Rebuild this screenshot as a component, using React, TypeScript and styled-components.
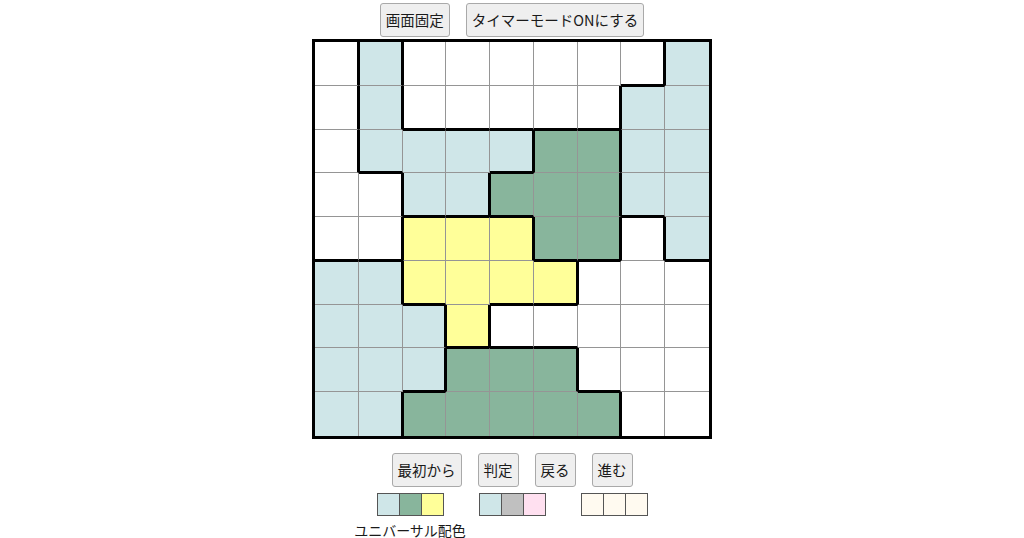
import React from "react";
import styled, { createGlobalStyle } from "styled-components";

const GlobalStyle = createGlobalStyle`
  html, body {
    margin: 0;
    padding: 0;
    background: #ffffff;
    font-family: "Noto Sans CJK JP", "Noto Sans", sans-serif;
    color: #222;
  }
`;

// region id per cell, 9x9
const regions = [
  "ABCCCCCCD",
  "ABCCCCCDD",
  "ABBBBEEDD",
  "AABBEEEDD",
  "AAFFFEEHD",
  "IIFFFFHHH",
  "IIIFHHHHH",
  "IIIJJJHHH",
  "IIJJJJJHH",
];

// colour per cell: w white, b light blue, g green, y yellow
const colors = [
  "wbwwwwwwb",
  "wbwwwwwbb",
  "wbbbbggbb",
  "wwbbgggbb",
  "wwyyyggwb",
  "bbyyyywww",
  "bbbywwwww",
  "bbbgggwww",
  "bbgggggww",
];

const palette: Record<string, string> = {
  w: "#ffffff",
  b: "#cfe6e8",
  g: "#88b59c",
  y: "#ffff99",
};

const THIN = "1px solid #959595";
const THICK_MAIN = "2px solid #000";
const THICK_HALF = "1px solid #000";

const Page = styled.div`
  display: flex;
  flex-direction: column;
  align-items: center;
  padding-top: 3px;
`;

const ButtonRow = styled.div<{ $top?: number }>`
  display: flex;
  gap: 16px;
  margin-top: ${(p) => p.$top ?? 0}px;
`;

const Button = styled.button`
  font-family: "Noto Sans CJK JP", "Noto Sans", sans-serif;
  font-size: 14.5px;
  line-height: 20px;
  color: #1a1a1a;
  background: #efefef;
  border: 1px solid #a9a9a9;
  border-radius: 3px;
  padding: 6px 5px;
  cursor: pointer;
  white-space: nowrap;
`;

const Board = styled.div`
  box-sizing: border-box;
  width: 400px;
  height: 400px;
  margin-top: 2px;
  border: 3px solid #000;
  display: grid;
  grid-template-columns: repeat(9, 1fr);
  grid-template-rows: repeat(9, 1fr);
`;

const Cell = styled.div<{
  $bg: string;
  $right: string;
  $bottom: string;
  $left: string;
  $top: string;
}>`
  box-sizing: border-box;
  background: ${(p) => p.$bg};
  border-right: ${(p) => p.$right};
  border-bottom: ${(p) => p.$bottom};
  border-left: ${(p) => p.$left};
  border-top: ${(p) => p.$top};
`;

const SwatchRow = styled.div`
  display: flex;
  gap: 35px;
  margin-top: 6px;
`;

const SwatchGroup = styled.div`
  width: 67px;
  flex-shrink: 0;
  display: flex;
  flex-direction: column;
  align-items: center;
`;

const Swatches = styled.div`
  display: flex;
  width: 67px;
  height: 23px;
  box-sizing: border-box;
  border: 1px solid #555;
  cursor: pointer;
`;

const Swatch = styled.div<{ $color: string }>`
  flex: 1;
  background: ${(p) => p.$color};
  & + & {
    border-left: 1px solid #555;
  }
`;

const PaletteLabel = styled.div`
  margin-top: 6px;
  font-size: 14px;
  white-space: nowrap;
  color: #1a1a1a;
  line-height: 16px;
`;

const palettes = [
  { colors: ["#cfe6e8", "#88b59c", "#ffff99"], label: "ユニバーサル配色" },
  { colors: ["#cfe6e8", "#c0c0c0", "#ffe0f0"] },
  { colors: ["#fffaf0", "#fffaf0", "#fffaf0"] },
];

const App = () => {
  const cells = [];
  for (let r = 0; r < 9; r++) {
    for (let c = 0; c < 9; c++) {
      const id = regions[r][c];
      const diff = (rr: number, cc: number) => regions[rr][cc] !== id;
      const right = c === 8 ? "none" : diff(r, c + 1) ? THICK_MAIN : THIN;
      const bottom = r === 8 ? "none" : diff(r + 1, c) ? THICK_MAIN : THIN;
      const left = c > 0 && diff(r, c - 1) ? THICK_HALF : "none";
      const top = r > 0 && diff(r - 1, c) ? THICK_HALF : "none";
      cells.push(
        <Cell
          key={`${r}-${c}`}
          $bg={palette[colors[r][c]]}
          $right={right}
          $bottom={bottom}
          $left={left}
          $top={top}
        />
      );
    }
  }

  return (
    <>
      <GlobalStyle />
      <Page>
        <ButtonRow>
          <Button>画面固定</Button>
          <Button>タイマーモードONにする</Button>
        </ButtonRow>
        <Board>{cells}</Board>
        <ButtonRow $top={14}>
          <Button>最初から</Button>
          <Button>判定</Button>
          <Button>戻る</Button>
          <Button>進む</Button>
        </ButtonRow>
        <SwatchRow>
          {palettes.map((p, i) => (
            <SwatchGroup key={i}>
              <Swatches>
                {p.colors.map((col, j) => (
                  <Swatch key={j} $color={col} />
                ))}
              </Swatches>
              {p.label && <PaletteLabel>{p.label}</PaletteLabel>}
            </SwatchGroup>
          ))}
        </SwatchRow>
      </Page>
    </>
  );
};

export default App;
